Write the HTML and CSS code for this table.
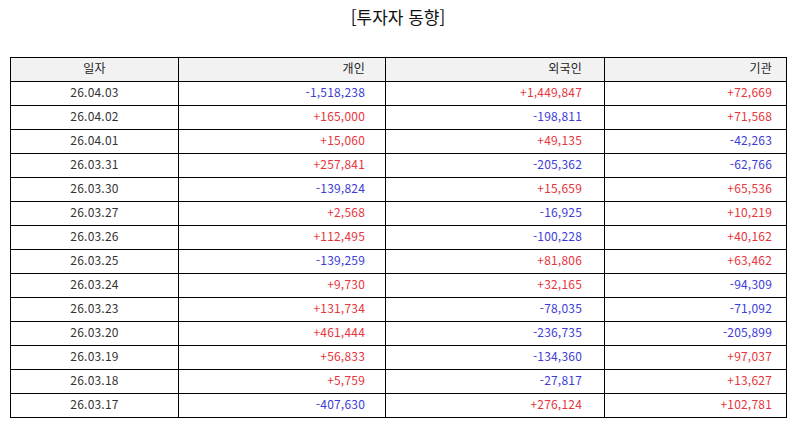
FILE: index.html
```html
<!DOCTYPE html>
<html lang="ko">
<head>
<meta charset="utf-8">
<title>투자자 동향</title>
<link rel="stylesheet" href="styles.css">
</head>
<body>
<div class="page">
  <h1 class="title">[투자자 동향]</h1>
  <table class="grid">
    <colgroup>
      <col class="c1"><col class="c2"><col class="c3"><col class="c4">
    </colgroup>
    <thead>
      <tr><th class="date">일자</th><th class="p2">개인</th><th class="p3">외국인</th><th class="p4">기관</th></tr>
    </thead>
    <tbody>
      <tr><td class="date">26.04.03</td><td class="p2 dn">-1,518,238</td><td class="p3 up">+1,449,847</td><td class="p4 up">+72,669</td></tr>
      <tr><td class="date">26.04.02</td><td class="p2 up">+165,000</td><td class="p3 dn">-198,811</td><td class="p4 up">+71,568</td></tr>
      <tr><td class="date">26.04.01</td><td class="p2 up">+15,060</td><td class="p3 up">+49,135</td><td class="p4 dn">-42,263</td></tr>
      <tr><td class="date">26.03.31</td><td class="p2 up">+257,841</td><td class="p3 dn">-205,362</td><td class="p4 dn">-62,766</td></tr>
      <tr><td class="date">26.03.30</td><td class="p2 dn">-139,824</td><td class="p3 up">+15,659</td><td class="p4 up">+65,536</td></tr>
      <tr><td class="date">26.03.27</td><td class="p2 up">+2,568</td><td class="p3 dn">-16,925</td><td class="p4 up">+10,219</td></tr>
      <tr><td class="date">26.03.26</td><td class="p2 up">+112,495</td><td class="p3 dn">-100,228</td><td class="p4 up">+40,162</td></tr>
      <tr><td class="date">26.03.25</td><td class="p2 dn">-139,259</td><td class="p3 up">+81,806</td><td class="p4 up">+63,462</td></tr>
      <tr><td class="date">26.03.24</td><td class="p2 up">+9,730</td><td class="p3 up">+32,165</td><td class="p4 dn">-94,309</td></tr>
      <tr><td class="date">26.03.23</td><td class="p2 up">+131,734</td><td class="p3 dn">-78,035</td><td class="p4 dn">-71,092</td></tr>
      <tr><td class="date">26.03.20</td><td class="p2 up">+461,444</td><td class="p3 dn">-236,735</td><td class="p4 dn">-205,899</td></tr>
      <tr><td class="date">26.03.19</td><td class="p2 up">+56,833</td><td class="p3 dn">-134,360</td><td class="p4 up">+97,037</td></tr>
      <tr><td class="date">26.03.18</td><td class="p2 up">+5,759</td><td class="p3 dn">-27,817</td><td class="p4 up">+13,627</td></tr>
      <tr><td class="date">26.03.17</td><td class="p2 dn">-407,630</td><td class="p3 up">+276,124</td><td class="p4 up">+102,781</td></tr>
    </tbody>
  </table>
</div>
</body>
</html>
```
FILE: styles.css
```css
html, body {
  margin: 0;
  padding: 0;
  background: #ffffff;
}
.page {
  width: 795px;
  padding: 0 0 0 10px;
  box-sizing: border-box;
  font-family: "Noto Sans CJK KR", "Noto Sans", sans-serif;
  color: #222222;
}
.title {
  margin: 0;
  padding-top: 5px;
  height: 57px;
  box-sizing: border-box;
  width: 776px;
  text-align: center;
  font-size: 17px;
  font-weight: normal;
  line-height: 24px;
  color: #111111;
}
.grid {
  width: 776px;
  border-collapse: collapse;
  table-layout: fixed;
  font-size: 12px;
  letter-spacing: 0.2px;
  color: #333333;
}
.c1 { width: 168px; }
.c2 { width: 207px; }
.c3 { width: 219px; }
.c4 { width: 182px; }
.grid th, .grid td {
  border: 1px solid #000000;
  height: 24px;
  padding: 0 0 3px 0;
  box-sizing: border-box;
  line-height: 16px;
  font-weight: normal;
  text-align: right;
  vertical-align: middle;
}
.grid th {
  background: #f2f2f2;
  color: #222222;
}
.grid .date { text-align: center; }
.grid .p2 { padding-right: 20px; }
.grid .p3 { padding-right: 22px; }
.grid .p4 { padding-right: 14px; }
.up { color: #e8343c; }
.dn { color: #3c3cd8; }
```
